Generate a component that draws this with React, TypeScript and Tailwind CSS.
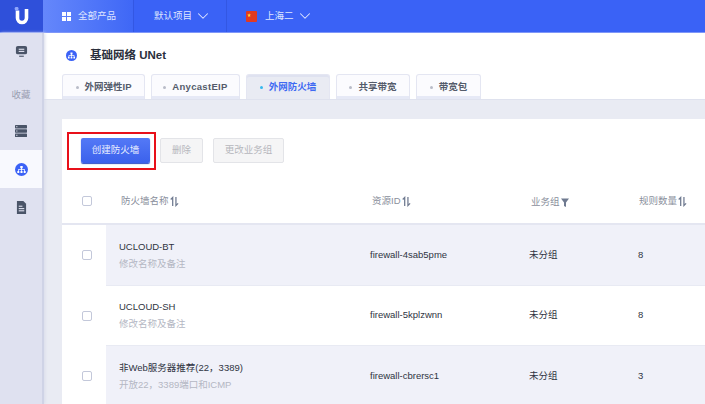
import { ChevronDown } from "lucide-react"

const font = { fontFamily: '"Liberation Sans", "Noto Sans CJK SC", sans-serif' }

const tabs = [
  { label: "外网弹性IP", w: "w-[83px]" },
  { label: "AnycastEIP", w: "w-[89px]", spaced: true },
  { label: "外网防火墙", w: "w-[84px]", active: true },
  { label: "共享带宽", w: "w-[74px]" },
  { label: "带宽包", w: "w-[65px]" },
]

const rows = [
  { name: "UCLOUD-BT", note: "修改名称及备注", id: "firewall-4sab5pme", group: "未分组", count: "8", shaded: true },
  { name: "UCLOUD-SH", note: "修改名称及备注", id: "firewall-5kplzwnn", group: "未分组", count: "8" },
  { name: "非Web服务器推荐(22，3389)", note: "开放22，3389端口和ICMP", id: "firewall-cbrersc1", group: "未分组", count: "3", shaded: true },
]

function SortIcon() {
  return (
    <svg viewBox="0 0 10 11" className="ml-px h-[11px] w-[9px] text-[#6f7a90]" fill="none" stroke="currentColor" strokeWidth="1.4">
      <path d="M3 10.5V1L.8 3.2" />
      <path d="M6.6 .5V10L9 7.6" />
    </svg>
  )
}

function FilterIcon() {
  return (
    <svg viewBox="0 0 8 9" className="ml-px h-[9px] w-[8px]" fill="#6f7a90">
      <path d="M0 .5h8L5 4.5V9L3 8V4.5z" />
    </svg>
  )
}

function NetIcon({ size }: { size: number }) {
  return (
    <svg viewBox="0 0 14 14" width={size} height={size}>
      <circle cx="7" cy="7" r="7" fill="#3b62f6" />
      <path d="M5.7 3.2h2.6v2.4H7.5v1.1h3.2v2h.8v2H9.4v-2h.5V7.5H7.4v1.2h.7v2H5.9v-2h.7V7.5H4.1v1.2h.5v2H2.5v-2h.8v-2h3.2V5.6h-.8z" fill="#fff" />
    </svg>
  )
}

function Checkbox() {
  return <span className="block h-[10px] w-[10px] rounded-[2px] border border-[#c3c8da] bg-white" />
}

function Sidebar() {
  return (
    <aside className="relative z-10 flex w-[44px] shrink-0 flex-col items-stretch border-r-2 border-[#cfd3e6] bg-[#dfe1f0] shadow-[1px_0_3px_#d9dcea]">
      <div className="flex h-[36px] items-center justify-center">
        <svg viewBox="0 0 14 14" className="h-[13px] w-[13px]">
          <rect x="1" y="1" width="12" height="9" rx="2" fill="#4a5468" />
          <rect x="4" y="4" width="6" height="1.2" fill="#dfe1f0" />
          <rect x="4" y="6.3" width="6" height="1.2" fill="#dfe1f0" />
          <rect x="4.5" y="11.5" width="5" height="1.2" fill="#4a5468" />
        </svg>
      </div>
      <div className="flex h-[43px] items-center justify-center pt-[9px] text-[9.5px] text-[#9a9fb2]">收藏</div>
      <div className="flex h-[38px] items-center justify-center">
        <svg viewBox="0 0 14 14" className="h-[14px] w-[14px]">
          <rect x="1" y="1" width="12" height="3.4" rx=".6" fill="#4a5468" />
          <rect x="1" y="5.3" width="12" height="3.4" rx=".6" fill="#4a5468" />
          <rect x="1" y="9.6" width="12" height="3.4" rx=".6" fill="#4a5468" />
          <rect x="2.2" y="2.2" width="1.2" height="1" fill="#dfe1f0" />
          <rect x="2.2" y="6.5" width="1.2" height="1" fill="#dfe1f0" />
          <rect x="2.2" y="10.8" width="1.2" height="1" fill="#dfe1f0" />
        </svg>
      </div>
      <div className="flex h-[38px] items-center justify-center bg-[#f8f9fe]">
        <NetIcon size={13} />
      </div>
      <div className="flex h-[38px] items-center justify-center">
        <svg viewBox="0 0 12 14" className="h-[13px] w-[11px]">
          <path d="M1 0h7l3 3v11H1z" fill="#4a5468" />
          <rect x="3" y="5" width="4" height="1.2" fill="#dfe1f0" />
          <rect x="3" y="7.6" width="6" height="1.2" fill="#dfe1f0" />
          <rect x="3" y="10" width="6" height="1.2" fill="#dfe1f0" />
        </svg>
      </div>
    </aside>
  )
}

function TopBar() {
  return (
    <header className="flex h-[33px] shrink-0 border-b border-[#7f97f8] bg-[#3a62f6] text-[9.5px] text-[#dfe6ff]">
      <div className="flex w-[43px] items-center justify-center bg-[#2f50da]">
        <svg viewBox="0 0 16 18" className="h-[18px] w-[16px]">
          <path d="M3.5 3.5v7.5a4.5 4.5 0 0 0 9 0V2" fill="none" stroke="#fff" strokeWidth="3.6" />
          <circle cx="2.6" cy="1.8" r="2" fill="#8fa6fb" />
        </svg>
      </div>
      <div className="flex w-[91px] items-center gap-[7px] border-r border-[#3357e3] bg-gradient-to-r from-[#6587fb] to-[#3f67f6] pl-[19px]">
        <svg viewBox="0 0 9 9" className="h-[9px] w-[9px]" fill="#fff">
          <rect width="4" height="4" />
          <rect x="5" width="4" height="4" />
          <rect y="5" width="4" height="4" />
          <rect x="5" y="5" width="4" height="4" />
        </svg>
        全部产品
      </div>
      <div className="flex w-[93px] items-center gap-[2px] border-r border-[#3357e3] pl-[20px]">
        默认项目
        <ChevronDown size={18} strokeWidth={1.4} />
      </div>
      <div className="flex items-center pl-[19px]">
        <svg viewBox="0 0 12 12" className="mr-[8px] h-[11px] w-[11px]">
          <rect width="12" height="12" rx="1" fill="#e23a22" />
          <path d="M3.4 2.4l.6 1.5 1.5.1-1.2 1 .4 1.5-1.3-.9-1.3.9.4-1.5-1.2-1 1.5-.1z" fill="#ffd83a" />
        </svg>
        上海二
        <ChevronDown size={18} strokeWidth={1.4} className="ml-[2px]" />
      </div>
    </header>
  )
}

function Tabs() {
  return (
    <div className="flex gap-[6px] border-b border-[#dfe2ee] pl-[18px]">
      {tabs.map((t) => (
        <div
          key={t.label}
          className={`${t.w} flex h-[25px] items-center justify-center gap-[6px] rounded-t-[3px] border border-b-0 border-[#e4e6f2] text-[9.5px] font-bold ${
            t.active ? "bg-[#e9ebf3] text-[#3f6af2] shadow-[inset_0_2px_0_#dfe2f0]" : "bg-[#fbfbfe] text-[#555c6b] shadow-[inset_0_-3px_0_#e6e9f6]"
          } ${t.spaced ? "tracking-[0.3px]" : ""}`}
        >
          <span className={`h-[3px] w-[3px] rounded-full ${t.active ? "bg-[#35b8ee]" : "bg-[#b9bcc8]"}`} />
          {t.label}
        </div>
      ))}
    </div>
  )
}

export default function App() {
  return (
    <div style={font} className="flex h-[404px] w-[705px] flex-col overflow-hidden bg-[#e9ebf3]">
      <TopBar />
      <div className="flex min-h-0 flex-1">
        <Sidebar />
        <main className="min-w-0 flex-1">
          <div className="bg-white pt-[11px]">
            <div className="flex h-[23px] items-center pl-[22px] text-[11.5px] font-bold text-[#2a2f3c]">
              <NetIcon size={11} />
              <span className="ml-[13px]">基础网络 UNet</span>
            </div>
            <div className="mt-[7px]">
              <Tabs />
            </div>
          </div>
          <section className="ml-[18px] mt-[19px] bg-white">
            <div className="flex items-start pl-[5px] pt-[13px]">
              <div className="border-2 border-[#e8101a] pb-[5px] pl-[12px] pr-[4px] pt-[4px]">
                <button className="flex h-[25px] w-[69px] items-center justify-center rounded-[2px] bg-gradient-to-b from-[#5479f6] to-[#3b61ec] text-[9.5px] text-[#e8edff] shadow-[0_1px_1px_#2f4fc8]">
                  创建防火墙
                </button>
              </div>
              <button className="ml-[4px] mt-[6px] flex h-[25px] w-[43px] items-center justify-center rounded-[2px] border border-[#e3e4e8] bg-[#f5f5f6] text-[9.5px] text-[#b5b7bd]">
                删除
              </button>
              <button className="ml-[10px] mt-[6px] flex h-[25px] w-[71px] items-center justify-center rounded-[2px] border border-[#e3e4e8] bg-[#f5f5f6] text-[9.5px] text-[#b5b7bd]">
                更改业务组
              </button>
            </div>
            <div className="grid h-[55px] grid-cols-[44px_266px_159px_108px_1fr] items-center border-b-2 border-[#e4e6f1] pt-[9px] text-[9.5px] text-[#8a8f9c]">
              <div className="flex justify-center pl-[5px]"><Checkbox /></div>
              <div className="flex items-center pl-[15px]">防火墙名称<SortIcon /></div>
              <div className="flex items-center">资源ID<SortIcon /></div>
              <div className="flex items-center pt-[2px]">业务组<FilterIcon /></div>
              <div className="flex items-center">规则数量<SortIcon /></div>
            </div>
            {rows.map((r) => (
              <div key={r.name} className="grid h-[60.5px] grid-cols-[44px_1fr]">
                <div className="flex items-center justify-center pl-[5px]"><Checkbox /></div>
                <div className={`grid grid-cols-[264px_159px_109px_1fr] items-center border-b border-[#e8eaf3] text-[9.5px] text-[#2f3442] ${r.shaded ? "bg-[#f0f1f9]" : "bg-white"}`}>
                  <div className="pl-[13px]">
                    <div className="leading-[13px]">{r.name}</div>
                    <div className="mt-[4px] leading-[13px] text-[#b4b7c3]">{r.note}</div>
                  </div>
                  <div>{r.id}</div>
                  <div>{r.group}</div>
                  <div>{r.count}</div>
                </div>
              </div>
            ))}
          </section>
        </main>
      </div>
    </div>
  )
}
